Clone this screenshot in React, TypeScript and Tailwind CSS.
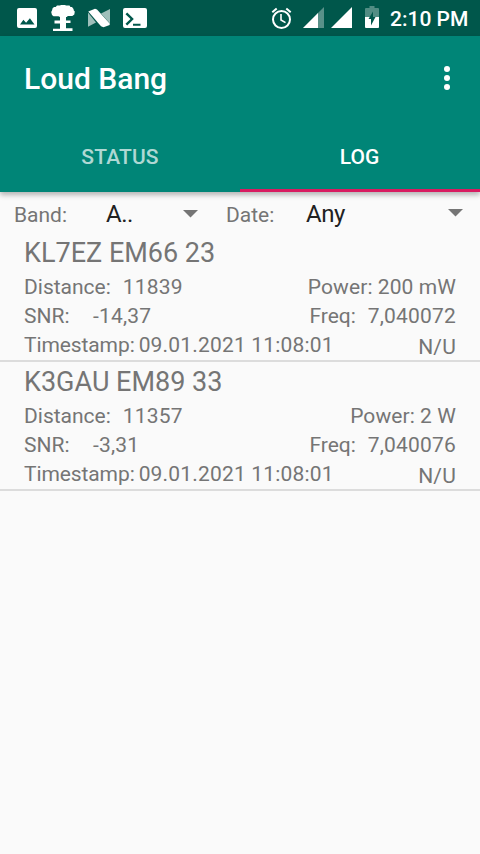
type Entry = {
  call: string;
  distance: string;
  power: string;
  snr: string;
  freq: string;
  time: string;
};

const entries: Entry[] = [
  { call: "KL7EZ EM66 23", distance: "11839", power: "200 mW", snr: "-14,37", freq: "7,040072", time: "09.01.2021 11:08:01" },
  { call: "K3GAU EM89 33", distance: "11357", power: "2 W", snr: "-3,31", freq: "7,040076", time: "09.01.2021 11:08:01" },
];

function StatusBar() {
  return (
    <div className="flex h-9 items-center bg-[#00574b] text-white">
      <svg className="ml-4 h-9 w-[140px]" viewBox="16 0 140 36" fill="currentColor">
        {/* picture */}
        <path fillRule="evenodd" d="M19 8h16a2 2 0 0 1 2 2v16a2 2 0 0 1-2 2H19a2 2 0 0 1-2-2V10a2 2 0 0 1 2-2zM20 24.500h14.500l-4.600-6.300-3.800 4.600-2.700-3z" />
        {/* mushroom cloud */}
        <path d="M57 5.500h3l1-.5h4l1 .5h3.500l1 1.500h1.500l1.500 2 .3 1.500 1 1-.5 3-2 1.500h-4.500l-1 1h-.8v3.500h4.500v2.500H66v5.200h6.500V31h-19.500v-2.300h7V23.500h-5.500V20.500H60v-3.500l-1.500-.7h-5l-1.500-1.300-.8-3 .8-1.500.7-2.500 1.500-1h1.500z" />
        {/* N */}
        <path d="M88 12.500V26.700l8-4.200zM110 9v14.500l-9-10z" opacity=".62" />
        <path d="M88.300 11.500l6.700-2.800 2 .8 12.700 14v1.500l-6.200 2.300-2.500-1z" />
        {/* terminal */}
        <path fillRule="evenodd" d="M125 8h20a2 2 0 0 1 2 2v16a2 2 0 0 1-2 2h-20a2 2 0 0 1-2-2V10a2 2 0 0 1 2-2zM125.500 14.300l5 4.700-5 4.700 1.700 1.700 6.600-6.400-6.600-6.400zM133 23.700v2h7.500v-2z" />
      </svg>
      <svg className="ml-[110px] h-9 w-[116px]" viewBox="266 0 116 36" fill="currentColor">
        {/* alarm */}
        <g fill="none" stroke="currentColor" strokeWidth="2">
          <circle cx="281.500" cy="19.500" r="8.500" />
          <path d="M281 14v6l4.500 2.600" strokeWidth="1.600" />
          <path d="M272.300 12.300l4.400-3.800M290.700 12.300l-4.400-3.800" />
        </g>
        {/* signals */}
        <path d="M324 7v21h-21z" opacity=".35" />
        <path d="M318 13v15h-15zM352 7v21h-21z" />
        {/* battery */}
        <path d="M369.500 6h5v2H378a1 1 0 0 1 1 1v8h-14V9a1 1 0 0 1 1-1h3.500z" opacity=".32" />
        <path d="M365 17h14v10a1 1 0 0 1-1 1h-12a1 1 0 0 1-1-1z" />
        <path d="M373 11.500l-4.500 7.500h2.500v6.500l4.500-8.500H373z" fill="#00574b" />
      </svg>
      <span className="ml-2 mt-[2px] text-[21px] leading-none font-medium whitespace-nowrap">2:10 PM</span>
    </div>
  );
}

function Header() {
  return (
    <header className="relative z-10 h-[156px] bg-[#008577] text-white shadow-[0_3px_5px_rgba(0,0,0,0.28)]">
      <div className="flex h-[84px] items-center justify-between pl-6 pr-[30px]">
        <h1 className="mt-[2px] text-[30px] leading-none font-medium">Loud Bang</h1>
        <svg className="h-6 w-[6px]" viewBox="0 0 6 24" fill="currentColor">
          <circle cx="3" cy="3" r="3" />
          <circle cx="3" cy="12" r="3" />
          <circle cx="3" cy="21" r="3" />
        </svg>
      </div>
      <div className="grid h-[72px] grid-cols-2 text-center text-[21px] leading-[74px] font-medium">
        <div className="tracking-[0.15px] text-white/70">STATUS</div>
        <div className="h-[72px] border-b-[3px] border-[#d81b60] pr-px">LOG</div>
      </div>
    </header>
  );
}

function Caret({ className }: { className: string }) {
  return (
    <svg className={className} viewBox="0 0 15 8" fill="#757575">
      <path d="M0 0h15L7.500 7.500z" />
    </svg>
  );
}

function Filters() {
  return (
    <div className="flex h-[41px] items-start pl-[14px] text-[21px] leading-[28px] text-[#757575]">
      <span className="w-[92px] pt-[9px]">Band:</span>
      <span className="w-[77px] pt-[7px] text-[24px] leading-[30px] tracking-[-0.5px] text-[#212121]">A..</span>
      <Caret className="mt-[18px] h-2 w-[15px]" />
      <span className="ml-7 w-20 pt-[9px]">Date:</span>
      <span className="w-[142px] pt-[7px] text-[24px] leading-[30px] tracking-[-0.4px] text-[#212121]">Any</span>
      <Caret className="mt-[17px] h-2 w-[15px]" />
    </div>
  );
}

function LogRow({ e }: { e: Entry }) {
  return (
    <li className="h-[129px] border-b-2 border-[#dcdcdc] px-6 pt-px text-[21px] leading-[29px] whitespace-nowrap text-[#757575]">
      <div className="text-[27px] leading-[39px]">{e.call}</div>
      <div className="flex">
        <div className="w-[310px] shrink-0">
          <div className="flex gap-3"><span>Distance:</span><span className="tracking-[0.15px]">{e.distance}</span></div>
          <div className="flex"><span className="w-[69px]">SNR:</span><span className="tracking-[0.2px]">{e.snr}</span></div>
          <div className="flex gap-1"><span className="tracking-[-0.1px]">Timestamp:</span><span className="tracking-[0.18px]">{e.time}</span></div>
        </div>
        <div className="flex w-[122px] flex-col items-end">
          <div className="tracking-[0.08px]">Power: {e.power}</div>
          <div className="flex gap-3"><span>Freq:</span><span className="tracking-[0.18px]">{e.freq}</span></div>
          <div className="pt-[2px] tracking-[0.2px]">N/U</div>
        </div>
      </div>
    </li>
  );
}

export default function App() {
  return (
    <div className="h-[854px] w-[480px] overflow-hidden bg-[#fafafa] font-[Roboto,sans-serif]">
      <StatusBar />
      <Header />
      <Filters />
      <ul>
        {entries.map((e) => (
          <LogRow key={e.call} e={e} />
        ))}
      </ul>
    </div>
  );
}
